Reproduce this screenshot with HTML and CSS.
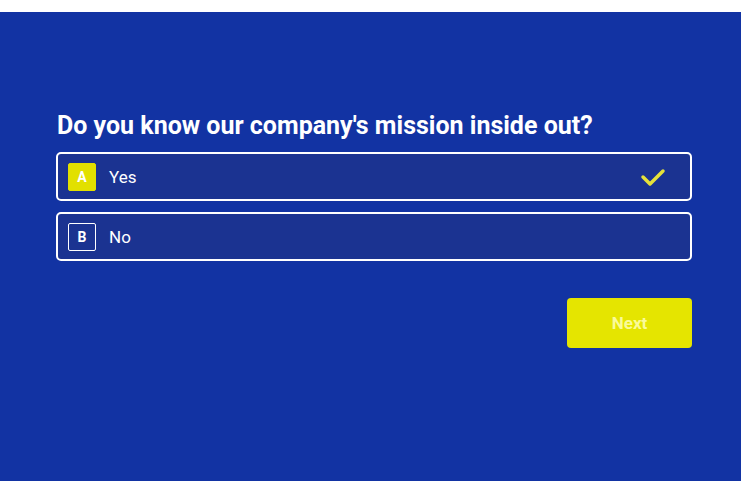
FILE: index.html
```html
<!DOCTYPE html>
<html lang="en">
<head>
    <meta charset="UTF-8">
    <meta name="viewport" content="width=device-width, initial-scale=1.0">
    <title>Quiz</title>
    <link rel="stylesheet" href="styles.css">
</head>
<body>
    <div class="quiz">
        <h2 class="question">Do you know our company's mission inside out?</h2>
        <div class="options">
            <div class="option selected">
                <span class="key">A</span>
                <span class="label">Yes</span>
                <svg class="check" width="26" height="20" viewBox="0 0 26 20">
                    <path d="M3 10 L10 17 L23 4" fill="none" stroke="#e6e23a" stroke-width="3.5" stroke-linecap="round" stroke-linejoin="round"/>
                </svg>
            </div>
            <div class="option">
                <span class="key">B</span>
                <span class="label">No</span>
            </div>
        </div>
        <div class="actions">
            <button class="next">Next</button>
        </div>
    </div>
</body>
</html>
```

FILE: styles.css
```css
body {
    margin: 0;
    padding: 12px 0 17px;
    background: #fff;
    font-family: Roboto, "Liberation Sans", sans-serif;
}
.quiz {
    background: #1233a3;
    height: 469px;
    box-sizing: border-box;
    padding: 98px 49px 0 56px;
    color: #fff;
}
.question {
    margin: 0 0 10px 1px;
    font-size: 25px;
    font-weight: 700;
    line-height: 32px;
}
.options {
    display: flex;
    flex-direction: column;
    gap: 11px;
}
.option {
    display: flex;
    align-items: center;
    height: 49px;
    box-sizing: border-box;
    padding: 0 24px 0 10px;
    border: 2px solid #fff;
    border-radius: 5px;
    background: #1b3391;
}
.key {
    width: 28px;
    height: 28px;
    box-sizing: border-box;
    display: flex;
    justify-content: center;
    align-items: center;
    border: 1px solid #fff;
    border-radius: 2px;
    font-size: 14px;
    font-weight: 700;
}
.option.selected .key {
    background: #e2e000;
    border-color: #e2e000;
}
.label {
    margin-left: 13px;
    font-size: 17px;
    flex: 1;
}
.actions {
    display: flex;
    justify-content: flex-end;
    margin-top: 37px;
}
.next {
    width: 125px;
    height: 50px;
    border: none;
    border-radius: 4px;
    background: #e5e500;
    color: #fafa9a;
    font-family: Roboto, "Liberation Sans", sans-serif;
    font-size: 17px;
    font-weight: 700;
    cursor: pointer;
}
```
